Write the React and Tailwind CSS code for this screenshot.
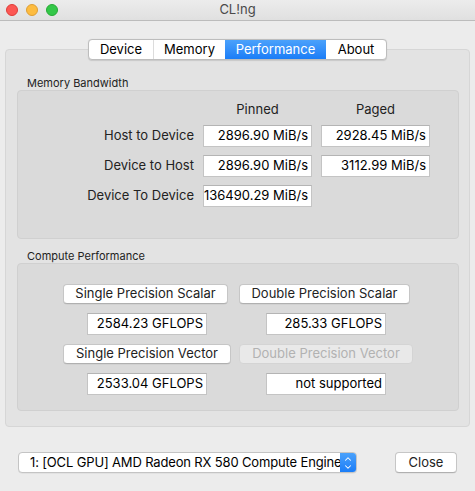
import { ChevronUp, ChevronDown } from "lucide-react";

const font = { fontFamily: "Inter, 'Liberation Sans', sans-serif" };

function Field({ children, className = "" }) {
  return (
    <div
      className={`h-[22px] bg-white border border-[#c4c4c4] border-t-[#b4b4b4] flex items-center justify-end pr-[3px] text-[13px] text-black whitespace-nowrap overflow-hidden ${className}`}
    >
      {children}
    </div>
  );
}

function Button({ children, className = "", disabled = false }) {
  return (
    <div
      className={`h-[20px] rounded-[4px] flex items-center justify-center text-[13px] whitespace-nowrap ${
        disabled
          ? "bg-[#e9e9e9] border border-[#d4d4d4] text-[#b2b2b2]"
          : "bg-white border border-[#c6c6c6] border-b-[#b0b0b0] text-[#222] shadow-[0_0.5px_0.5px_rgba(0,0,0,0.08)]"
      } ${className}`}
    >
      {children}
    </div>
  );
}

function Tabs() {
  const tabs = [
    { name: "Device", w: "w-[64px]" },
    { name: "Memory", w: "w-[72px]" },
    { name: "Performance", w: "w-[101px]", active: true },
    { name: "About", w: "w-[60px]" },
  ];
  return (
    <div className="relative z-10 flex justify-center">
      <div className="flex h-[21px] rounded-[4px] border border-[#bdbdbd] bg-white overflow-hidden shadow-[0_0.5px_1px_rgba(0,0,0,0.12)]">
        {tabs.map((t, i) => (
          <div
            key={t.name}
            className={`${t.w} flex items-center justify-center text-[13px] ${
              t.active
                ? "bg-gradient-to-b from-[#4aa1fb] to-[#1a7df7] text-white"
                : "text-black"
            } ${i > 0 && !t.active && !tabs[i - 1].active ? "border-l border-[#dcdcdc]" : ""}`}
          >
            {t.name}
          </div>
        ))}
      </div>
    </div>
  );
}

export default function App() {
  return (
    <div className="w-[475px] h-[491px] bg-[#ececec] flex flex-col overflow-hidden" style={font}>
      {/* title bar */}
      <div className="relative h-[21px] bg-gradient-to-b from-[#ececec] to-[#e0e0e0] border-b border-[#bcbcbc] flex items-center justify-center">
        <div className="absolute left-[6px] top-[4px] flex gap-[8px]">
          <div className="w-[12px] h-[12px] rounded-full bg-[#fc5753] border border-[#df3d39]" />
          <div className="w-[12px] h-[12px] rounded-full bg-[#fdbc40] border border-[#de9f34]" />
          <div className="w-[12px] h-[12px] rounded-full bg-[#33c748] border border-[#27aa35]" />
        </div>
        <span className="text-[13px] text-[#4a4a4a]">CL!ng</span>
      </div>

      <div className="px-[5px] pt-[18px]">
        <Tabs />
        <div className="-mt-[11px] h-[378px] rounded-[4px] bg-[#e3e3e3] border border-[#d6d6d6] pt-[27px] pl-[11px] pr-[10px]">
          {/* Memory Bandwidth */}
          <div className="h-[13px] pl-[10px] text-[11px] leading-[13px] text-[#222]">Memory Bandwidth</div>
          <div className="h-[149px] rounded-[4px] bg-[#dadada] border border-[#d0d0d0] pt-[10px]">
            <div className="grid grid-cols-[176px_109px_109px] gap-x-[9px]">
              <div />
              <div className="h-[18px] flex items-center justify-center text-[13px] text-[#222]">Pinned</div>
              <div className="h-[18px] flex items-center justify-center text-[13px] text-[#222]">Paged</div>
            </div>
            <div className="mt-[6px] grid grid-cols-[176px_109px_109px] gap-x-[9px] gap-y-[8px] items-center">
              <div className="text-right text-[13px] text-[#222]">Host to Device</div>
              <Field>2896.90 MiB/s</Field>
              <Field>2928.45 MiB/s</Field>
              <div className="text-right text-[13px] text-[#222]">Device to Host</div>
              <Field>2896.90 MiB/s</Field>
              <Field>3112.99 MiB/s</Field>
              <div className="text-right text-[13px] text-[#222]">Device To Device</div>
              <Field>136490.29 MiB/s</Field>
              <div />
            </div>
          </div>

          {/* Compute Performance */}
          <div className="mt-[11px] h-[13px] pl-[10px] text-[11px] leading-[13px] text-[#222]">Compute Performance</div>
          <div className="h-[148px] rounded-[4px] bg-[#dadada] border border-[#d0d0d0] pt-[20px] flex justify-center gap-[8px]">
            <div className="w-[168px] flex flex-col items-center">
              <Button className="w-[165px] self-start">Single Precision Scalar</Button>
              <Field className="mt-[9px] w-[120px] h-[21px]">2584.23 GFLOPS</Field>
              <Button className="mt-[9px] w-[168px]">Single Precision Vector</Button>
              <Field className="mt-[9px] w-[120px] h-[21px]">2533.04 GFLOPS</Field>
            </div>
            <div className="w-[174px] flex flex-col items-center">
              <Button className="w-[171px] self-start">Double Precision Scalar</Button>
              <Field className="mt-[9px] w-[120px] h-[21px]">285.33 GFLOPS</Field>
              <Button className="mt-[9px] w-[174px]" disabled>
                Double Precision Vector
              </Button>
              <Field className="mt-[9px] w-[120px] h-[21px]">not supported</Field>
            </div>
          </div>
        </div>
      </div>

      {/* bottom row */}
      <div className="mt-[25px] pl-[18px] pr-[18px] flex items-center justify-between">
        <div className="w-[339px] h-[21px] flex rounded-[4px] border border-[#c4c4c4] bg-white overflow-hidden shadow-[0_0.5px_0.5px_rgba(0,0,0,0.08)]">
          <div className="flex-1 flex items-center pl-[11px] text-[13px] tracking-[-0.15px] text-black whitespace-nowrap overflow-hidden">
            1: [OCL GPU] AMD Radeon RX 580 Compute Engine
          </div>
          <div className="w-[16px] bg-gradient-to-b from-[#4aa1fb] to-[#1a7df7] flex flex-col items-center justify-center text-white">
            <ChevronUp size={10} strokeWidth={2.5} className="-mb-[2px]" />
            <ChevronDown size={10} strokeWidth={2.5} />
          </div>
        </div>
        <Button className="w-[62px] h-[21px]">Close</Button>
      </div>
    </div>
  );
}
